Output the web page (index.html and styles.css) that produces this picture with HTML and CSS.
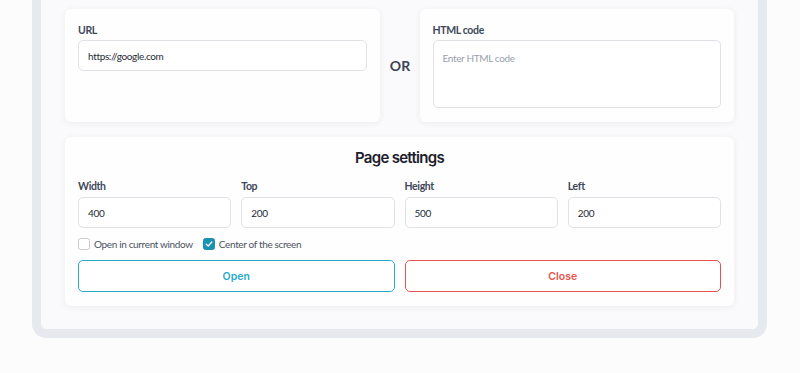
FILE: index.html
```html
<!DOCTYPE html>
<html lang="en">
<head>
  <meta charset="UTF-8">
  <meta name="viewport" content="width=device-width, initial-scale=1.0">
  <title>Popup opener</title>
  <link rel="stylesheet" href="styles.css">
</head>
<body>

  <div class="frame">

    <!-- Source -->
    <div class="source-row">
      <div class="card">
        <label class="field-label">URL</label>
        <input class="field-input" type="text" value="https://google.com">
      </div>
      <div class="or">OR</div>
      <div class="card">
        <label class="field-label">HTML code</label>
        <textarea class="field-input field-area" placeholder="Enter HTML code"></textarea>
      </div>
    </div>

    <!-- Page settings -->
    <div class="card settings">
      <div class="settings-title">Page settings</div>

      <div class="settings-grid">
        <div>
          <label class="field-label">Width</label>
          <input class="field-input" type="text" value="400">
        </div>
        <div>
          <label class="field-label">Top</label>
          <input class="field-input" type="text" value="200">
        </div>
        <div>
          <label class="field-label">Height</label>
          <input class="field-input" type="text" value="500">
        </div>
        <div>
          <label class="field-label">Left</label>
          <input class="field-input" type="text" value="200">
        </div>
      </div>

      <div class="checks">
        <label class="check">
          <span class="box"></span>
          Open in current window
        </label>
        <label class="check">
          <span class="box checked">
            <svg width="8" height="8" viewBox="0 0 8 8"><path d="M1.2 4.2 L3.2 6 L6.8 2" fill="none" stroke="#fff" stroke-width="1.2" stroke-linecap="round" stroke-linejoin="round"/></svg>
          </span>
          Center of the screen
        </label>
      </div>

      <div class="actions">
        <button class="btn btn-open">Open</button>
        <button class="btn btn-close">Close</button>
      </div>
    </div>

  </div>

</body>
</html>
```

FILE: styles.css
```css
body {
  margin: 0;
  padding: 0;
  background: #fcfcfd;
  font-family: 'Lato', 'Liberation Sans', sans-serif;
  color: #3b4254;
}

/* Outer frame */
.frame {
  width: 735px;
  box-sizing: border-box;
  margin-left: 32px;
  border: 9px solid #e6eaee;
  border-top: none;
  border-radius: 0 0 14px 14px;
  background: #fafafc;
  padding: 9px 24px 23px;
}

.card {
  background: #fefefe;
  border-radius: 6px;
  box-shadow: 0 1px 6px rgba(30, 40, 60, 0.07);
  padding: 13px 13px;
  box-sizing: border-box;
}

/* Source row */
.source-row {
  display: grid;
  grid-template-columns: 1fr 40px 1fr;
  height: 113px;
  margin-bottom: 15px;
}

.or {
  align-self: center;
  text-align: center;
  font-size: 14px;
  font-weight: 700;
  color: #3c4354;
  padding-left: 1px;
}

.field-label {
  display: block;
  font-size: 10.5px;
  font-weight: 700;
  letter-spacing: -0.35px;
  line-height: 16px;
  color: #40475a;
  margin-bottom: 2px;
}

.field-input {
  display: block;
  width: 100%;
  height: 31px;
  box-sizing: border-box;
  border: 1px solid #dfe2e6;
  border-radius: 5px;
  background: #fff;
  padding: 0 9px;
  font-family: 'Lato', 'Liberation Sans', sans-serif;
  font-size: 10px;
  letter-spacing: -0.35px;
  color: #262b36;
  outline: none;
}

.field-area {
  height: 68px;
  resize: none;
  padding: 10px 9px;
  line-height: 14px;
}

.field-area::placeholder {
  color: #9aa0ab;
}

/* Settings */
.settings {
  padding: 11px 13px 14px;
}

.settings-title {
  text-align: center;
  font-family: 'Inter', 'Liberation Sans', sans-serif;
  font-size: 15px;
  font-weight: 600;
  letter-spacing: -0.7px;
  line-height: 20px;
  color: #1c202c;
  margin-bottom: 10px;
}

.settings-grid {
  display: grid;
  grid-template-columns: repeat(4, 1fr);
  gap: 10px;
}

.settings-grid .field-label {
  margin-bottom: 3px;
}

.checks {
  display: flex;
  gap: 10px;
  margin-top: 8px;
  height: 16px;
  align-items: center;
}

.check {
  display: flex;
  align-items: center;
  gap: 4px;
  font-size: 10px;
  letter-spacing: -0.35px;
  color: #4b5262;
}

.box {
  width: 12px;
  height: 12px;
  box-sizing: border-box;
  border: 1px solid #c5c9d0;
  border-radius: 2.5px;
  background: #fff;
  display: flex;
  align-items: center;
  justify-content: center;
}

.box.checked {
  background: #1b91b2;
  border-color: #1b91b2;
}

.actions {
  display: grid;
  grid-template-columns: 1fr 1fr;
  gap: 10px;
  margin-top: 8px;
}

.btn {
  height: 32px;
  background: #fff;
  border-radius: 5px;
  font-family: 'Inter', 'Liberation Sans', sans-serif;
  font-size: 10.5px;
  font-weight: 600;
  cursor: pointer;
}

.btn-open {
  border: 1.5px solid #2aa9cb;
  color: #2aa9cb;
}

.btn-close {
  border: 1.5px solid #e8534f;
  color: #e8534f;
}
```
